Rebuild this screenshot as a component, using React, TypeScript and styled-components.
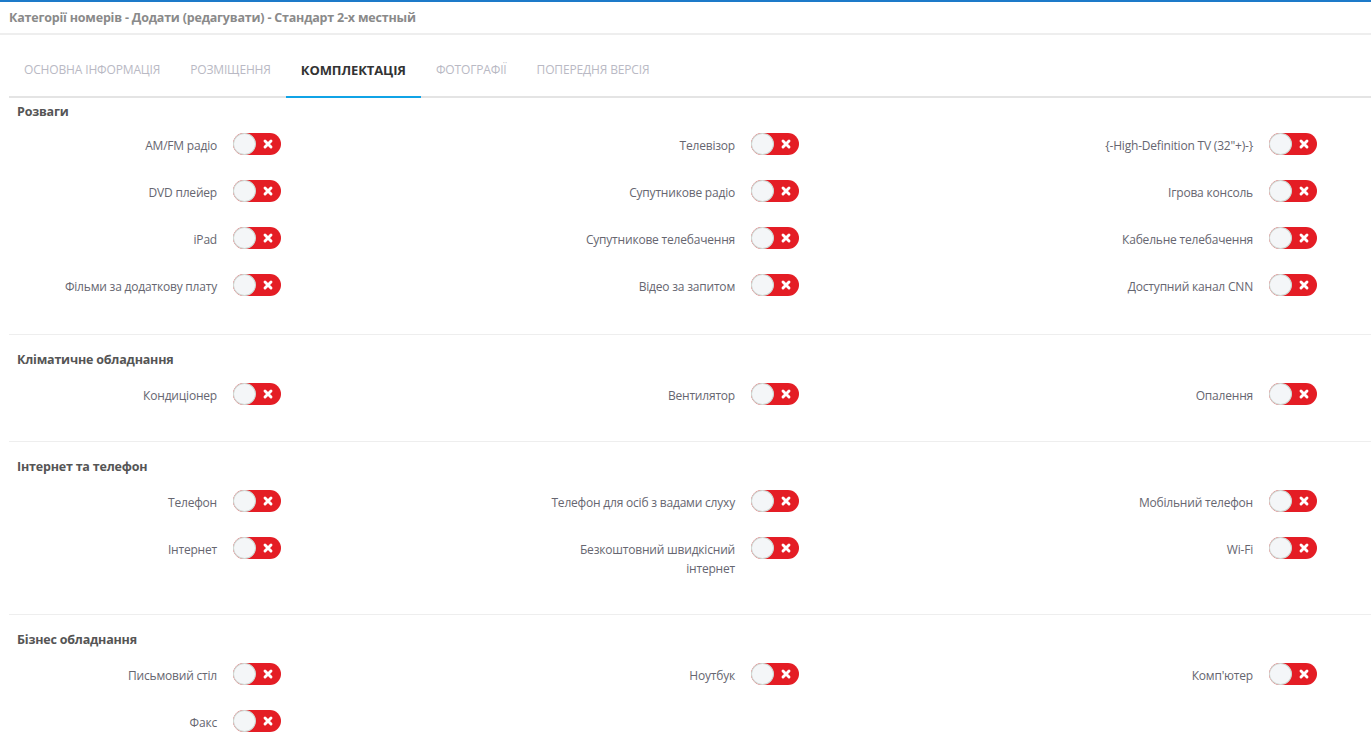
import React from "react";
import styled, { createGlobalStyle } from "styled-components";

const GlobalStyle = createGlobalStyle`
  html, body {
    margin: 0;
    padding: 0;
    background: #ffffff;
    font-family: "Open Sans", "Liberation Sans", sans-serif;
  }
`;

const Page = styled.div`
  border-top: 2px solid #1d7ac9;
  min-height: 738px;
  overflow: hidden;
`;

const Header = styled.div`
  height: 31px;
  padding-left: 9px;
  display: flex;
  align-items: center;
  border-bottom: 2px solid #eeeeee;
`;

const Title = styled.h1`
  margin: 0;
  font-size: 12.5px;
  font-weight: 700;
  color: #8a8a8a;
  letter-spacing: -0.2px;
`;

const Body = styled.div`
  padding-left: 9px;
`;

const Tabs = styled.div`
  display: flex;
  margin-top: 1px;
  border-bottom: 2px solid #e4e4e4;
`;

const Tab = styled.div<{ $active?: boolean }>`
  padding: 26px 15px 18px;
  line-height: 16px;
  font-size: ${(p) => (p.$active ? "13px" : "12px")};
  text-transform: uppercase;
  font-weight: ${(p) => (p.$active ? 700 : 400)};
  color: ${(p) => (p.$active ? "#333333" : "#b9b9c4")};
  letter-spacing: ${(p) => (p.$active ? "-0.1px" : "-0.15px")};
  margin-bottom: -2px;
  border-bottom: 2px solid ${(p) => (p.$active ? "#10a3e6" : "transparent")};
`;

const Section = styled.section<{ $first?: boolean }>`
  border-top: ${(p) => (p.$first ? "none" : "1px solid #eeeeee")};
  padding: ${(p) => (p.$first ? "6px 0 38px" : "17px 0 36px")};
`;

const Heading = styled.h2<{ $first?: boolean }>`
  margin: 0 0 ${(p) => (p.$first ? "13px" : "15px")} 8px;
  font-size: 12.5px;
  line-height: 16px;
  font-weight: 700;
  color: #555555;
  letter-spacing: -0.2px;
`;

const Grid = styled.div`
  display: grid;
  grid-template-columns: repeat(3, 518px);
  row-gap: 25px;
`;

const Row = styled.div`
  display: flex;
  align-items: flex-start;
  gap: 16px;
`;

const Label = styled.div`
  width: 200px;
  margin-left: 8px;
  padding-top: 3px;
  text-align: right;
  font-size: 12px;
  line-height: 19px;
  color: #666670;
  letter-spacing: -0.2px;
`;

const Switch = styled.div`
  position: relative;
  flex: none;
  width: 48px;
  height: 22px;
  border-radius: 11px;
  background: #e41d25;
`;

const Knob = styled.span`
  position: absolute;
  left: 0;
  top: 0;
  width: 23px;
  height: 22px;
  box-sizing: border-box;
  border-radius: 50%;
  background: #f4f6f8;
  border: 1px solid #cfdbd6;
`;

const Cross = styled.svg`
  position: absolute;
  left: 29px;
  top: 5px;
`;

function Toggle() {
  return (
    <Switch>
      <Knob />
      <Cross width="12" height="12" viewBox="0 0 12 12">
        <path
          d="M3 3 L9 9 M9 3 L3 9"
          stroke="#ffffff"
          strokeWidth="2.9"
          strokeLinecap="round"
        />
      </Cross>
    </Switch>
  );
}

const groups: { title: string; items: string[] }[] = [
  {
    title: "Розваги",
    items: [
      "AM/FM радіо",
      "Телевізор",
      "{-High-Definition TV (32\"+)-}",
      "DVD плейер",
      "Супутникове радіо",
      "Ігрова консоль",
      "iPad",
      "Супутникове телебачення",
      "Кабельне телебачення",
      "Фільми за додаткову плату",
      "Відео за запитом",
      "Доступний канал CNN",
    ],
  },
  {
    title: "Кліматичне обладнання",
    items: ["Кондиціонер", "Вентилятор", "Опалення"],
  },
  {
    title: "Інтернет та телефон",
    items: [
      "Телефон",
      "Телефон для осіб з вадами слуху",
      "Мобільний телефон",
      "Інтернет",
      "Безкоштовний швидкісний інтернет",
      "Wi-Fi",
    ],
  },
  {
    title: "Бізнес обладнання",
    items: ["Письмовий стіл", "Ноутбук", "Комп'ютер", "Факс"],
  },
];

const tabs = [
  "Основна інформація",
  "Розміщення",
  "Комплектація",
  "Фотографії",
  "Попередня версія",
];

export default function App() {
  return (
    <Page>
      <GlobalStyle />
      <Header>
        <Title>Категорії номерів - Додати (редагувати) - Стандарт 2-х местный</Title>
      </Header>
      <Body>
        <Tabs>
          {tabs.map((t, i) => (
            <Tab key={t} $active={i === 2}>
              {t}
            </Tab>
          ))}
        </Tabs>
        {groups.map((g, gi) => (
          <Section key={g.title} $first={gi === 0}>
            <Heading $first={gi === 0}>{g.title}</Heading>
            <Grid>
              {g.items.map((item) => (
                <Row key={item}>
                  <Label>{item}</Label>
                  <Toggle />
                </Row>
              ))}
            </Grid>
          </Section>
        ))}
      </Body>
    </Page>
  );
}
